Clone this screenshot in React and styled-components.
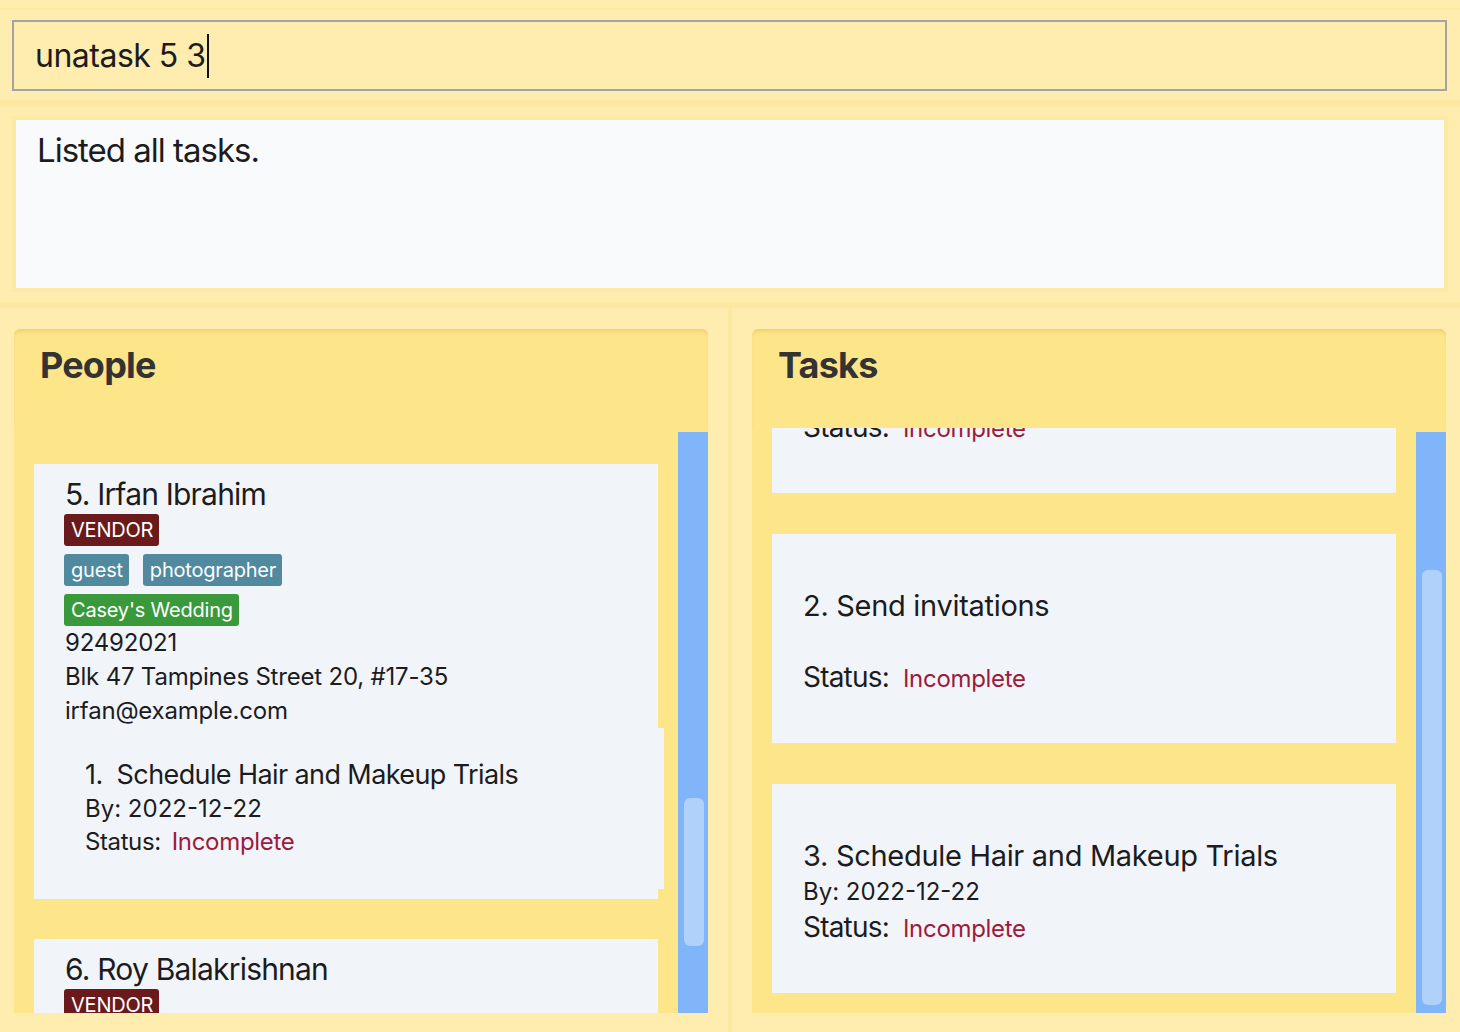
import React, { useLayoutEffect, useRef } from "react";
import styled, { createGlobalStyle } from "styled-components";

const GlobalStyle = createGlobalStyle`
  body {
    margin: 0;
    background: #feedaf;
    font-family: Inter, "Noto Sans", sans-serif;
    color: #1c1c1e;
  }
  * { box-sizing: border-box; }
`;

const Page = styled.div`
  display: flex;
  flex-direction: column;
  height: 1032px;
  padding-top: 8px;
`;

const CommandSection = styled.div`
  border-top: 2px solid #fde8a2;
  padding: 10px 13px 9px 12px;
`;

const CommandBox = styled.div`
  display: flex;
  align-items: center;
  height: 71px;
  border: 2px solid #a4a4a4;
  padding-left: 21px;
  font-size: 32px;
  letter-spacing: -0.5px;
`;

const Caret = styled.span`
  display: inline-block;
  width: 2px;
  height: 44px;
  margin-left: 1px;
  background: #111;
`;

const ResultSection = styled.div`
  border-top: 6px solid #fde8a2;
  padding: 10px 12px;
`;

const ResultBox = styled.div`
  height: 176px;
  border: 4px solid #fde9a6;
  background: #f8fafc;
  padding: 10px 0 0 21px;
  font-size: 33px;
  letter-spacing: -1px;
`;

const ListsSection = styled.div`
  flex: 1;
  display: flex;
  border-top: 6px solid #fde8a2;
  min-height: 0;
`;

const Column = styled.div`
  display: flex;
  min-width: 0;
  width: ${(p) => (p.$left ? "732px" : "auto")};
  flex: ${(p) => (p.$left ? "none" : "1")};
  padding: ${(p) => (p.$left ? "21px 20px 19px 14px" : "21px 14px 19px 20px")};
  border-right: ${(p) => (p.$left ? "4px solid #fde8a2" : "none")};
`;

const Panel = styled.div`
  flex: 1;
  min-width: 0;
  display: flex;
  flex-direction: column;
  background: #fde58a;
  border-radius: 6px 6px 0 0;
  min-height: 0;
`;

const PanelHeader = styled.div`
  height: 99px;
  flex: none;
  padding: 14px 26px;
  border-radius: 6px 6px 0 0;
  box-shadow: inset 0 4px 4px -2px rgba(205, 165, 50, 0.35);

  h2 {
    margin: 0;
    font-size: 36px;
    font-weight: 700;
    color: #333;
    letter-spacing: -0.8px;
  }
`;

const PanelBody = styled.div`
  flex: 1;
  display: flex;
  min-height: 0;
  min-width: 0;
`;

const Viewport = styled.div`
  flex: 1;
  min-width: 0;
  overflow: hidden;
  display: flex;
  flex-direction: column;
  gap: ${(p) => p.$gap}px;
  padding: ${(p) => p.$pad};
`;

const Track = styled.div`
  position: relative;
  width: 30px;
  flex: none;
  margin-top: 4px;
  background: #80b6f9;
`;

const Thumb = styled.div`
  position: absolute;
  left: 6px;
  width: 20px;
  top: ${(p) => p.$top}px;
  height: ${(p) => p.$height}px;
  border-radius: 6px;
  background: #afd1fa;
`;

const PersonCard = styled.div`
  flex: none;
  min-width: 0;
  background: #f1f5f9;
  padding: 11px 31px 10px;
`;

const Name = styled.div`
  font-size: 30px;
  line-height: 38px;
  letter-spacing: -0.8px;
`;

const BadgeRow = styled.div`
  display: flex;
  gap: 14px;
  margin-top: ${(p) => (p.$first ? "1px" : "8px")};
  margin-left: -1px;
`;

const badgeColors = {
  role: "#6a1a1a",
  tag: "#518a9e",
  wedding: "#3a9a3b",
};

const Badge = styled.span`
  height: 32px;
  line-height: 32px;
  padding: 0 6px 0 7px;
  border-radius: 3px;
  font-size: 20px;
  letter-spacing: -0.2px;
  color: #fff;
  background: ${(p) => badgeColors[p.$kind]};
`;

const InfoLine = styled.div`
  font-size: 24px;
  line-height: 34px;
  letter-spacing: -0.2px;
`;

const NestedTask = styled.div`
  width: 599px;
  background: #f1f5f9;
  padding: 30px 20px 29px;
`;

const NestedTitle = styled.div`
  font-size: 27px;
  line-height: 34px;
  letter-spacing: -0.6px;
`;

const DueLine = styled.div`
  font-size: 24px;
  line-height: ${(p) => p.$lh}px;
`;

const StatusLine = styled.div`
  display: flex;
  align-items: baseline;
  height: ${(p) => p.$lh}px;
  line-height: ${(p) => p.$lh - 2}px;
`;

const StatusLabel = styled.span`
  font-size: ${(p) => p.$size}px;
  letter-spacing: ${(p) => (p.$size > 24 ? "-0.8px" : "-0.4px")};
  margin-right: ${(p) => p.$gap}px;
`;

const StatusValue = styled.span`
  font-size: 24px;
  letter-spacing: -0.3px;
  color: #9e1a3c;
`;

const TaskCard = styled.div`
  flex: none;
  background: #f1f5f9;
  padding: 54px 31px 47px;
`;

const TaskTitle = styled.div`
  font-size: 29px;
  line-height: 36px;
  letter-spacing: -0.3px;
`;

const people = [
  {
    id: 5,
    name: "Irfan Ibrahim",
    tags: ["guest", "photographer"],
    wedding: "Casey's Wedding",
    phone: "92492021",
    address: "Blk 47 Tampines Street 20, #17-35",
    email: "irfan@example.com",
    tasks: [{ name: "Schedule Hair and Makeup Trials", by: "2022-12-22" }],
  },
  {
    id: 6,
    name: "Roy Balakrishnan",
    tags: ["colleagues"],
    wedding: "Casey's Wedding",
    phone: "92624417",
    address: "Blk 45 Aljunied Street 85, #11-31",
    email: "royb@example.com",
    tasks: [],
  },
];

const tasks = [
  { name: "Book wedding venue", by: "" },
  { name: "Send invitations", by: "" },
  { name: "Schedule Hair and Makeup Trials", by: "2022-12-22" },
];

const Status = ({ label, lh, gap }) => (
  <StatusLine $lh={lh}>
    <StatusLabel $size={label} $gap={gap}>
      Status:
    </StatusLabel>
    <StatusValue>Incomplete</StatusValue>
  </StatusLine>
);

const PersonItem = ({ person }) => (
  <PersonCard>
    <Name>
      {person.id}. {person.name}
    </Name>
    <BadgeRow $first>
      <Badge $kind="role">VENDOR</Badge>
    </BadgeRow>
    <BadgeRow>
      {person.tags.map((t) => (
        <Badge key={t} $kind="tag">
          {t}
        </Badge>
      ))}
    </BadgeRow>
    <BadgeRow>
      <Badge $kind="wedding">{person.wedding}</Badge>
    </BadgeRow>
    <InfoLine>{person.phone}</InfoLine>
    <InfoLine>{person.address}</InfoLine>
    <InfoLine>{person.email}</InfoLine>
    {person.tasks.map((t, i) => (
      <NestedTask key={t.name}>
        <NestedTitle>
          {i + 1}.{"\u00a0 "}
          {t.name}
        </NestedTitle>
        <DueLine $lh={34}>By: {t.by}</DueLine>
        <Status label={24} lh={34} gap={11} />
      </NestedTask>
    ))}
  </PersonCard>
);

function App() {
  const taskList = useRef(null);

  useLayoutEffect(() => {
    const el = taskList.current;
    if (el) el.scrollTop = el.scrollHeight;
  }, []);

  return (
    <>
      <GlobalStyle />
      <Page>
        <CommandSection>
          <CommandBox>
            unatask 5 3
            <Caret />
          </CommandBox>
        </CommandSection>

        <ResultSection>
          <ResultBox>Listed all tasks.</ResultBox>
        </ResultSection>

        <ListsSection>
          <Column $left>
            <Panel>
              <PanelHeader>
                <h2>People</h2>
              </PanelHeader>
              <PanelBody>
                <Viewport $pad="36px 20px 0" $gap={40}>
                  {people.map((p) => (
                    <PersonItem key={p.id} person={p} />
                  ))}
                </Viewport>
                <Track>
                  <Thumb $top={366} $height={148} />
                </Track>
              </PanelBody>
            </Panel>
          </Column>

          <Column>
            <Panel>
              <PanelHeader>
                <h2>Tasks</h2>
              </PanelHeader>
              <PanelBody>
                <Viewport $pad="20px" $gap={41} ref={taskList}>
                  {tasks.map((t, i) => (
                    <TaskCard key={t.name}>
                      <TaskTitle>
                        {i + 1}. {t.name}
                      </TaskTitle>
                      <DueLine $lh={36}>{t.by ? `By: ${t.by}` : "\u00a0"}</DueLine>
                      <Status label={28} lh={36} gap={14} />
                    </TaskCard>
                  ))}
                </Viewport>
                <Track>
                  <Thumb $top={138} $height={435} />
                </Track>
              </PanelBody>
            </Panel>
          </Column>
        </ListsSection>
      </Page>
    </>
  );
}

export default App;
